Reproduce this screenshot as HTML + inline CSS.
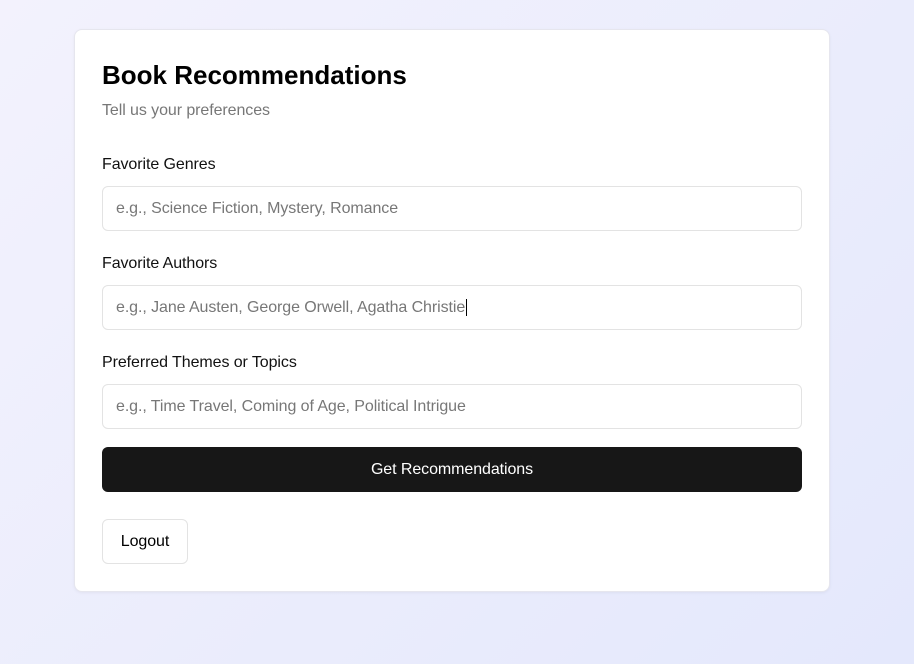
<!DOCTYPE html>
<html><head><style>
*{box-sizing:border-box;margin:0;padding:0}
body{width:914px;height:664px;overflow:hidden;background:linear-gradient(135deg,#f3f2fd 0%,#e4e8fc 100%);font-family:"Liberation Sans",Arial,sans-serif;position:relative}
.card{position:absolute;left:74px;top:29px;width:756px;height:563px;background:#fff;border-radius:8px;border:1px solid #e6e6ee;box-shadow:0 1px 3px rgba(0,0,0,.05)}
.a{position:absolute;left:27px}
h1{position:absolute;left:27px;top:30px;font-size:26px;font-weight:bold;color:#000;letter-spacing:0}
.sub{top:72px;font-size:16px;color:#777;letter-spacing:-0.08px}
.lbl{font-size:16px;color:#111;letter-spacing:-0.08px}
.inp{position:absolute;left:27px;width:700px;height:45px;border:1px solid #e3e3e3;border-radius:6px;font-size:16px;color:#777;padding:13px 13px 0;line-height:18px;letter-spacing:-0.08px}
.btn{position:absolute;left:27px;top:417px;width:700px;height:45px;background:#171717;border-radius:6px;color:#fff;font-size:16px;text-align:center;line-height:45px;letter-spacing:-0.08px}
.lo{position:absolute;left:27px;top:489px;width:86px;height:45px;border:1px solid #e3e3e3;border-radius:6px;font-size:16px;text-align:center;line-height:43px;color:#000;letter-spacing:-0.08px}
</style></head><body>
<div class="card">
<h1>Book Recommendations</h1>
<div class="a sub">Tell us your preferences</div>
<div class="a lbl" style="top:126px">Favorite Genres</div>
<div class="inp" style="top:156px">e.g., Science Fiction, Mystery, Romance</div>
<div class="a lbl" style="top:225px">Favorite Authors</div>
<div class="inp" style="top:255px">e.g., Jane Austen, George Orwell, Agatha Christie<span style="border-left:1px solid #000;margin-left:1px"></span></div>
<div class="a lbl" style="top:324px">Preferred Themes or Topics</div>
<div class="inp" style="top:354px">e.g., Time Travel, Coming of Age, Political Intrigue</div>
<div class="btn">Get Recommendations</div>
<div class="lo">Logout</div>
</div>
</body></html>
